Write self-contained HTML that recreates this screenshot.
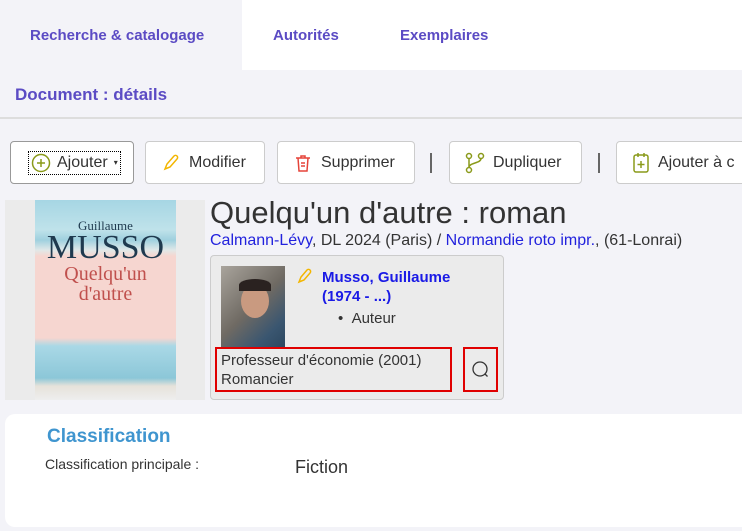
<!DOCTYPE html>
<html><head><meta charset="utf-8"><style>
*{margin:0;padding:0;box-sizing:border-box}
body{width:742px;height:531px;overflow:hidden;background:#f3f3f8;font-family:"Liberation Sans",sans-serif;position:relative;color:#333}
.a{position:absolute}
.tab{font-weight:bold;color:#5b4bc4;font-size:15px;top:27px}
.btn{position:absolute;top:141px;height:43px;background:#fff;border:1px solid #ccc;border-radius:4px;font-size:16px;color:#333;display:flex;align-items:center;padding-left:15px;gap:8px;white-space:nowrap;overflow:hidden}
.sep{position:absolute;top:153px;width:2px;height:20px;background:#666}
</style></head><body>
<div class="a" style="left:242px;top:0;width:500px;height:70px;background:#fff"></div>
<div class="a tab" style="left:30px">Recherche &amp; catalogage</div>
<div class="a tab" style="left:273px">Autorités</div>
<div class="a tab" style="left:400px">Exemplaires</div>
<div class="a" style="left:15px;top:85px;font-size:17px;font-weight:bold;color:#5b4bc4">Document : détails</div>
<div class="a" style="left:0;top:117px;width:742px;height:2px;background:#ddd"></div>

<div class="btn" style="left:10px;width:124px;border-color:#999">
<span style="border:1px dotted #000;padding:1px 2px;display:flex;align-items:center;gap:6px;margin-left:2px"><svg width="20" height="20" viewBox="0 0 20 20"><circle cx="10" cy="10" r="8.5" fill="none" stroke="#8a9a1a" stroke-width="1.5"/><path d="M10 6v8M6 10h8" stroke="#8a9a1a" stroke-width="1.5"/></svg>Ajouter<span style="font-size:8px">▾</span></span></div>
<div class="btn" style="left:145px;width:120px"><svg width="20" height="20" viewBox="0 0 20 20"><path d="M4 16l2-5 7-8a2 2 0 013 3l-7 8z" fill="none" stroke="#f3b600" stroke-width="1.5"/></svg>Modifier</div>
<div class="btn" style="left:277px;width:138px"><svg width="20" height="20" viewBox="0 0 20 20"><path d="M3 5h14M8 5V3h4v2M5 5l1 13h8l1-13M8 10h4M8 13h4" fill="none" stroke="#e5443a" stroke-width="1.5"/></svg>Supprimer</div>
<div class="sep" style="left:430px"></div>
<div class="btn" style="left:449px;width:133px"><svg width="20" height="22" viewBox="0 0 20 22"><circle cx="4" cy="4" r="2.5" fill="none" stroke="#8a9a1a" stroke-width="1.5"/><circle cx="4" cy="18" r="2.5" fill="none" stroke="#8a9a1a" stroke-width="1.5"/><circle cx="16" cy="4" r="2.5" fill="none" stroke="#8a9a1a" stroke-width="1.5"/><path d="M4 6.5v9M16 6.5c0 5-12 4-12 9" fill="none" stroke="#8a9a1a" stroke-width="1.5"/></svg>Dupliquer</div>
<div class="sep" style="left:598px"></div>
<div class="btn" style="left:616px;width:140px"><svg width="18" height="22" viewBox="0 0 18 22"><rect x="2" y="3" width="14" height="17" rx="2" fill="none" stroke="#8a9a1a" stroke-width="1.5"/><path d="M6 1v4M12 1v4M9 9v7M5.5 12.5h7" stroke="#8a9a1a" stroke-width="1.5"/></svg>Ajouter à c</div>

<div class="a" style="left:5px;top:200px;width:200px;height:200px;background:#ebebeb"></div>
<div class="a" style="left:35px;top:200px;width:141px;height:200px;background:linear-gradient(#a6d6e4 0px,#bfe2ea 30px,#9fd0de 40px,#e0e8e8 50px,#f6d6d0 56px,#f6d6d0 138px,#a9d8e6 146px,#8cc7d8 178px,#e6e2da 186px,#eee 200px)">
<div style="text-align:center;font-family:'Liberation Serif',serif;color:#1f3a4f;margin-top:20px;font-size:13px;line-height:12px">Guillaume</div>
<div style="text-align:center;font-family:'Liberation Serif',serif;color:#1f3a4f;font-size:34px;line-height:32px">MUSSO</div>
<div style="text-align:center;font-family:'Liberation Serif',serif;color:#c0504d;font-size:20px;line-height:20px">Quelqu'un<br>d'autre</div></div>

<div class="a" style="left:210px;top:195px;font-size:31px;color:#333">Quelqu'un d'autre : roman</div>
<div class="a" style="left:210px;top:232px;font-size:16px;color:#333;white-space:nowrap"><span style="color:#2222dd">Calmann-Lévy</span>, DL 2024 (Paris) / <span style="color:#2222dd">Normandie roto impr.</span>, (61-Lonrai)</div>

<div class="a" style="left:210px;top:255px;width:294px;height:145px;background:#ebebeb;border:1px solid #ccc;border-radius:4px"></div>
<div class="a" style="left:221px;top:266px;width:64px;height:81px;background:linear-gradient(135deg,#a9a49c,#6f6a63 50%,#3a5670 80%,#2c4760)"><div style="position:absolute;left:20px;top:18px;width:28px;height:34px;border-radius:50%;background:#c99a80"></div><div style="position:absolute;left:18px;top:13px;width:32px;height:12px;border-radius:50% 50% 0 0;background:#2a2220"></div></div>
<svg class="a" style="left:296px;top:267px" width="18" height="18" viewBox="0 0 18 18"><path d="M3 15l2-5 6-7a2 2 0 013 3l-6 7z" fill="none" stroke="#f3b600" stroke-width="1.5"/></svg>
<div class="a" style="left:322px;top:268px;font-size:15px;font-weight:bold;color:#1a1ae6;line-height:19px">Musso, Guillaume<br>(1974 - ...)</div>
<div class="a" style="left:338px;top:310px;font-size:15px;color:#333">•&nbsp;&nbsp;Auteur</div>
<div class="a" style="left:215px;top:347px;width:237px;height:45px;border:2px solid #e00000"></div>
<div class="a" style="left:221px;top:351px;font-size:15px;line-height:19px;color:#333">Professeur d'économie (2001)<br>Romancier</div>
<div class="a" style="left:463px;top:347px;width:35px;height:45px;border:2px solid #e00000"></div>
<svg class="a" style="left:471px;top:360px" width="20" height="20" viewBox="0 0 20 20"><circle cx="9" cy="9" r="7" fill="none" stroke="#333" stroke-width="1.3"/><path d="M14 14l2.5 2.5" stroke="#333" stroke-width="1.3"/></svg>

<div class="a" style="left:5px;top:414px;width:760px;height:113px;background:#fff;border-radius:10px"></div>
<div class="a" style="left:47px;top:426px;font-size:19px;font-weight:bold;color:#3f95cf">Classification</div>
<div class="a" style="left:45px;top:456px;font-size:14px;color:#333">Classification principale :</div>
<div class="a" style="left:295px;top:457px;font-size:18px;color:#333">Fiction</div>
</body></html>
